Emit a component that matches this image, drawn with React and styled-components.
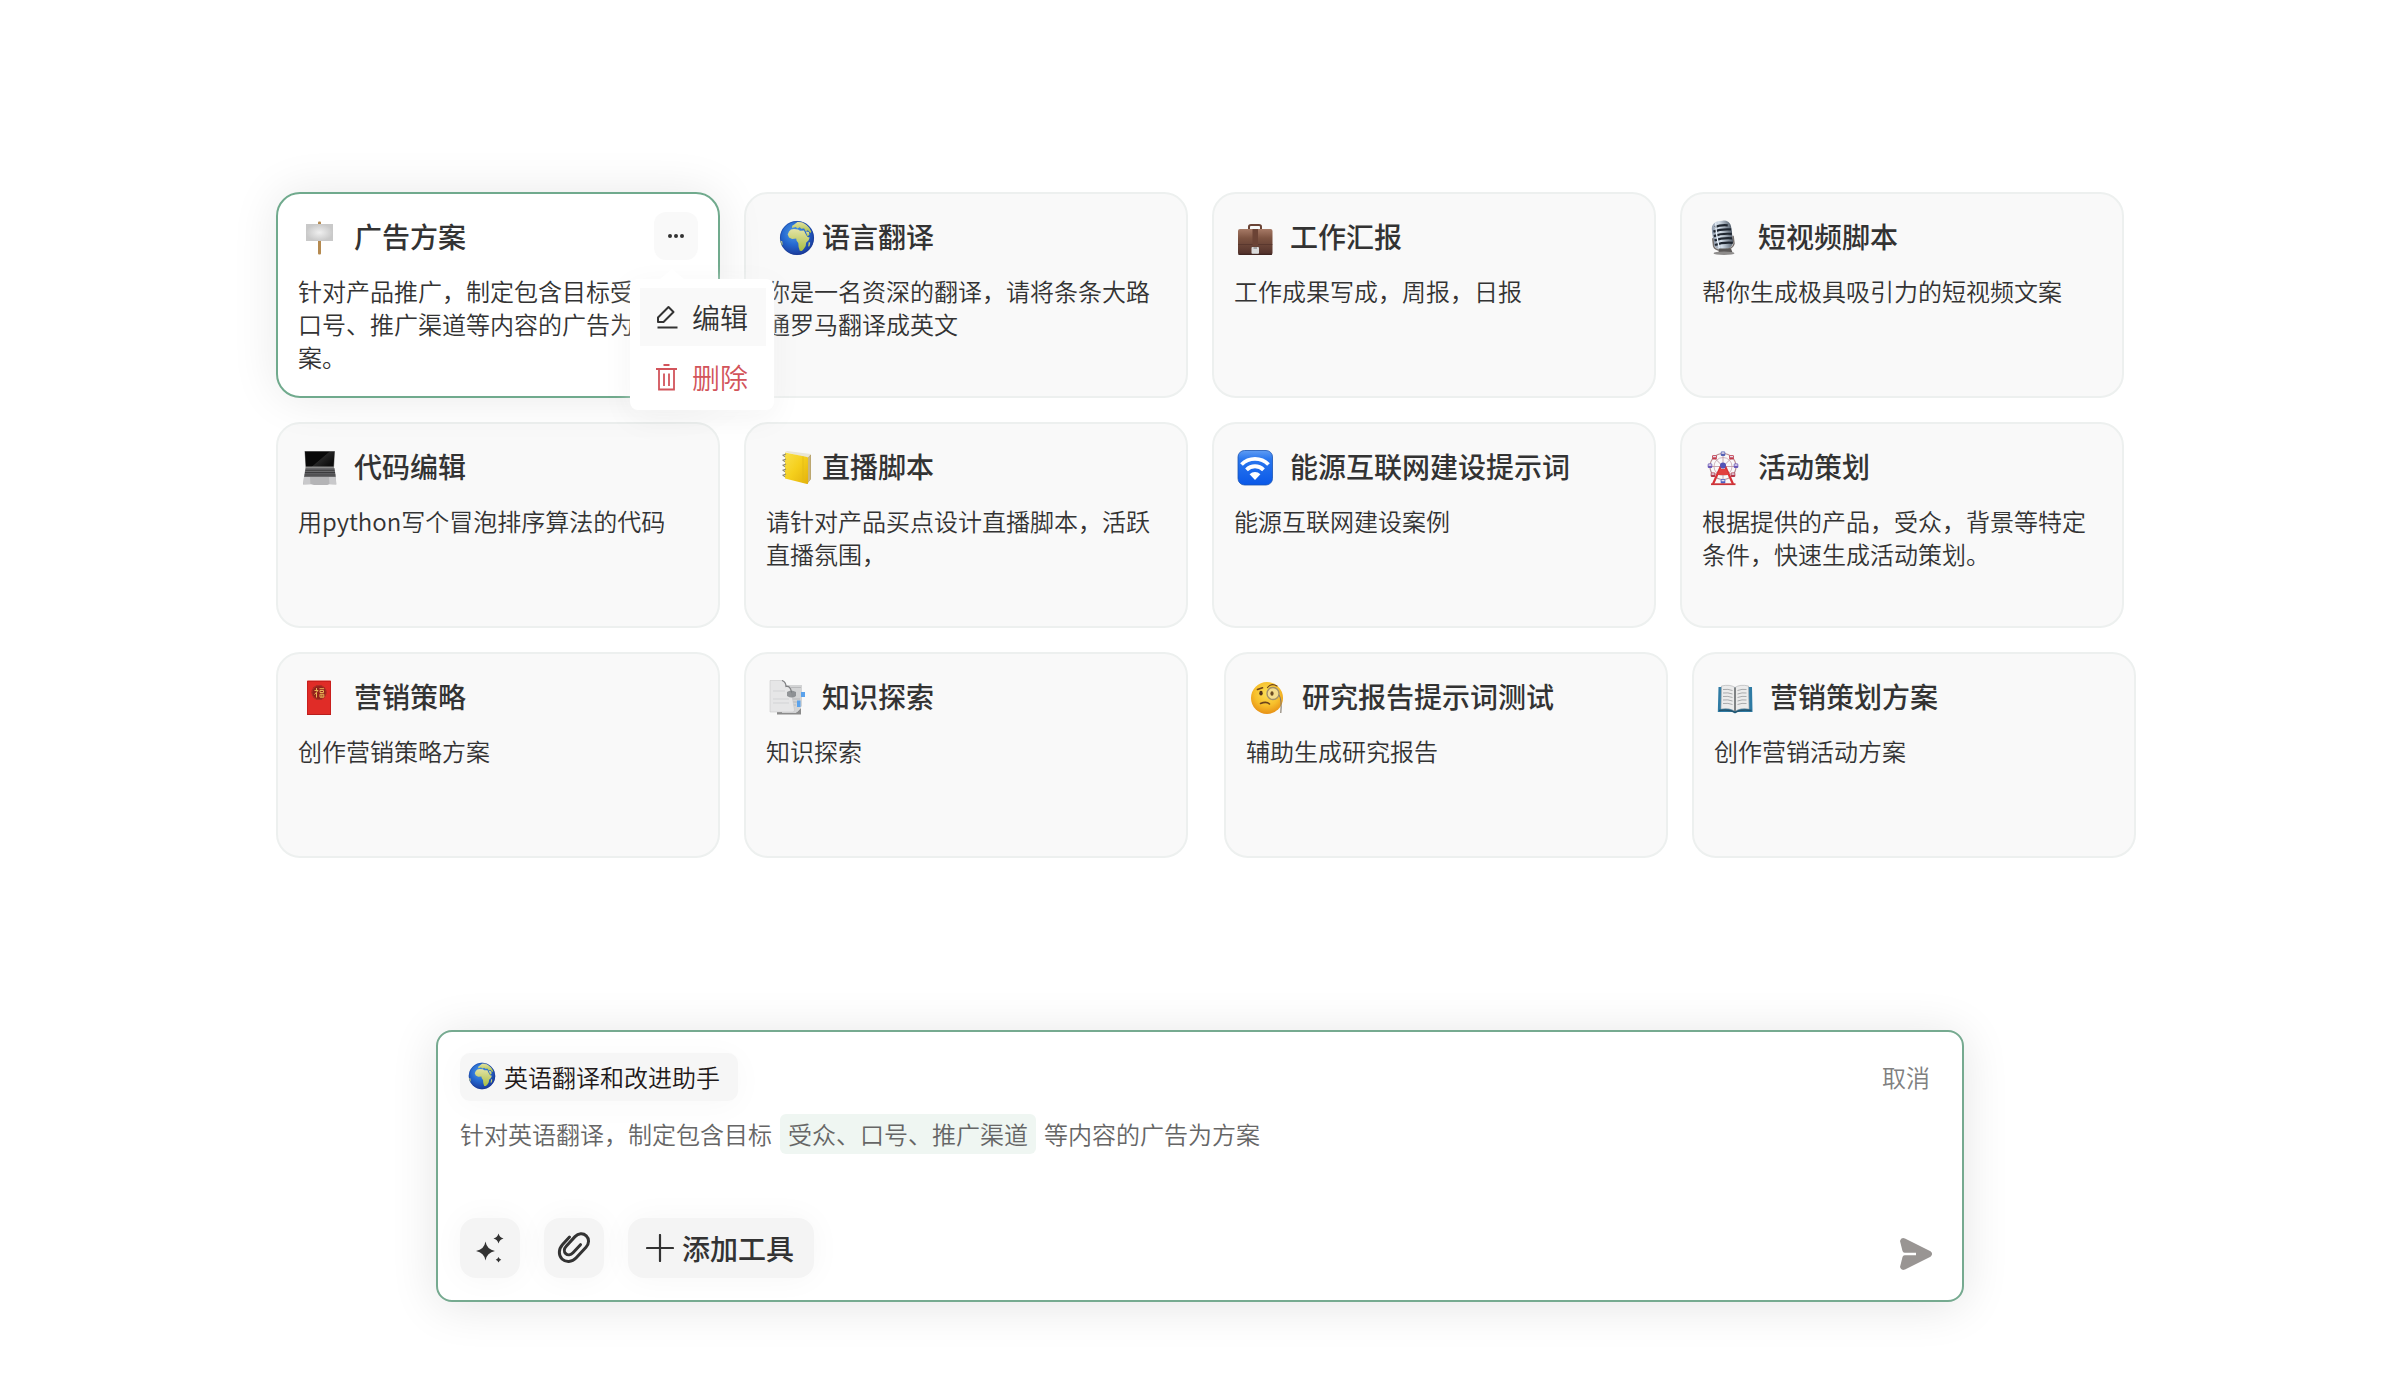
import React from "react";
import styled, { createGlobalStyle, css } from "styled-components";

const GlobalStyle = createGlobalStyle`
  *, *::before, *::after { box-sizing: border-box; }
  body {
    margin: 0;
    background: #fff;
    color: #333;
    font-family: "Noto Sans CJK SC", sans-serif;
  }
  button, input { font: inherit; color: inherit; border: 0; margin: 0; padding: 0; background: none; }
  button { cursor: pointer; }
  h2, p, ul { margin: 0; padding: 0; }
  svg { display: block; flex: none; }
`;

/* ---------- drawings ---------- */

const Emoji = ({ size = 36, children }) => (
  <svg width={size} height={size} viewBox="0 0 36 36" aria-hidden="true">{children}</svg>
);

const Signpost = () => (
  <Emoji>
    <defs>
      <radialGradient id="board"><stop offset="0" stopColor="#efefef" /><stop offset="1" stopColor="#c9c9c9" /></radialGradient>
    </defs>
    <rect x="17" y="1.5" width="3" height="33" rx="1" fill="#b58a50" />
    <rect x="5" y="4" width="27" height="17" fill="url(#board)" />
  </Emoji>
);

const Globe = ({ size, id }) => (
  <Emoji size={size}>
    <defs>
      <radialGradient id={`${id}-sea`} cx=".42" cy=".35" r=".65">
        <stop offset="0" stopColor="#4f9be6" /><stop offset=".55" stopColor="#2467cf" /><stop offset="1" stopColor="#1b3c9c" />
      </radialGradient>
      <linearGradient id={`${id}-land`} x1="0" y1="0" x2="0" y2="1">
        <stop offset="0" stopColor="#e3e3a4" /><stop offset="1" stopColor="#a9bd45" />
      </linearGradient>
      <clipPath id={`${id}-clip`}><circle cx="18" cy="18" r="17" /></clipPath>
    </defs>
    <circle cx="18" cy="18" r="17" fill={`url(#${id}-sea)`} />
    <g clipPath={`url(#${id}-clip)`} fill={`url(#${id}-land)`}>
      <path d="M12 9.500 15 9l4 .4 2 1.300 4-.2 1.600 3.500 1.900 3 2.200.6-1.200 3-2.400 2.200-.4 3.300-2 3-1.800 1.800-2.100-.2-1.200-3.600-.3-4-1.700-2.400-.4-2.100-4 .5-3.200-1.600-1.300-3 1.300-3z" />
      <path d="m13 8 .2-2.300 2-1.300L18.400 2 23 1.800l4 2.600 3.200 3.400 2.200 4-1 1.200-2.600-2.800-2.200 1.200-1.400-2.800-3 .2-1.400-1.500-2.400 1.200-1.600-1.500z" />
      <path d="m26.800 11.600 3 .4.7 2.700-2 1.700z" />
      <path d="m0 20 3.200 1.300.4 3.100-2 3.600zM29.800 22l1.400.8-.7 3.400-1.400.4z" />
    </g>
    <circle cx="18" cy="18" r="16.600" fill="none" stroke="#17368e" strokeWidth=".8" opacity=".6" />
  </Emoji>
);

const Briefcase = () => (
  <Emoji>
    <defs>
      <linearGradient id="leather" x1="0" y1="0" x2="0" y2="1"><stop offset="0" stopColor="#a67a66" /><stop offset=".35" stopColor="#7d5341" /><stop offset="1" stopColor="#50302a" /></linearGradient>
    </defs>
    <path d="M12 10V6.800Q12 5 14 5h8q2 0 2 1.800V10" fill="none" stroke="#6a4436" strokeWidth="2" />
    <rect x="1" y="9" width="34.500" height="26" rx="2" fill="url(#leather)" />
    <path d="M1 24.500h34.500" stroke="#4a2c25" strokeWidth="1" opacity=".5" />
    <rect x="15.500" y="9" width="5.500" height="16" fill="#6b4335" />
    <rect x="14.500" y="27" width="7.500" height="7" rx="1" fill="#dcdcdc" />
    <rect x="16.500" y="27" width="3.500" height="2" fill="#a5a5a5" />
    <path d="M1.500 34.300h33.500" stroke="#3b2320" strokeWidth="1" />
  </Emoji>
);

const Microphone = () => (
  <Emoji>
    <defs>
      <linearGradient id="mic"><stop offset="0" stopColor="#8b97a8" /><stop offset=".4" stopColor="#d5dfea" /><stop offset="1" stopColor="#55606d" /></linearGradient>
      <clipPath id="mic-clip"><rect x="7.500" y=".5" width="20" height="29" rx="8" /></clipPath>
    </defs>
    <g transform="rotate(-7 18 16)">
      <g clipPath="url(#mic-clip)">
        <rect x="7.500" y=".5" width="20" height="29" fill="url(#mic)" />
        <g stroke="#1f2630" strokeWidth="2.200" fill="none">
          <path d="M11 6q6-1.500 13 0M9 10.500q8-2 18 0M9 15q8-2 18 0M9 19.500q8-2 18 0M9 24q8-2 18 0" />
        </g>
        <path d="M12.500 1.500q-1.500 12 .5 27" stroke="#e8f1fa" strokeWidth="1.300" fill="none" />
      </g>
      <path d="M7.500 17v8q1 5 10 5t10.500-5v-8" stroke="#77716f" strokeWidth="1.500" fill="none" />
    </g>
    <path d="M14 28.500h12l1.500 4h-14z" fill="#5b5857" />
    <ellipse cx="19" cy="33.300" rx="10.500" ry="1.700" fill="#8e8c8b" />
  </Emoji>
);

const Laptop = () => (
  <Emoji>
    <defs>
      <linearGradient id="screen" x1="0" y1="0" x2="1" y2=".6"><stop offset=".6" stopColor="#090909" /><stop offset=".63" stopColor="#262626" /><stop offset="1" stopColor="#0e0e0e" /></linearGradient>
    </defs>
    <path d="M3.500 1h30.500l-1 17H4.500z" fill="#8b8b8b" />
    <path d="M4 1.500h29.500l-.9 15H4.900z" fill="url(#screen)" />
    <path d="M4.500 18h29l1.300 9H3z" fill="#69696b" />
    <path d="M4.500 20.200h29M4 22.600h30M3.700 25h30.700" stroke="#3b3b3d" strokeWidth="1.100" />
    <path d="M3 27h31.800l.5 7.500-7-.3-2 .8H13l-3-.8-8 .3z" fill="#b4b4b6" />
    <path d="M9 27h-6l-.6 7.200 7-.2zM28 27h6.700l.5 7.200-6.800-.2z" fill="#c9c9cb" />
  </Emoji>
);

const Notebook = () => (
  <Emoji>
    <defs>
      <linearGradient id="cover" x1="0" y1="0" x2="1" y2="1"><stop offset="0" stopColor="#f9e04b" /><stop offset=".5" stopColor="#f5cf1c" /><stop offset="1" stopColor="#e3b10c" /></linearGradient>
    </defs>
    <path d="m27 7 5-2.500V29l-4 5z" fill="#a9925a" />
    <path d="m6 2 2-1 24 3-3 4z" fill="#e9e6d6" />
    <path d="M28.600 8 31.600 5v24l-3 4z" fill="#c9b680" />
    <path d="M6 2.500 28 7q1 .3 1 1.300v25q0 1-1 .7L6 28.500z" fill="url(#cover)" />
    <path d="M24 6.400v26.500" stroke="#e2bb18" strokeWidth=".8" />
    <path d="m7 4-3 1.200 2 1.600M7 9l-3 1.200 2 1.600M7 14l-3 1.200 2 1.600M7 19l-3 1.200 2 1.600M7 24l-3 1.200 2 1.600" stroke="#8f8a78" strokeWidth="1.100" fill="none" />
  </Emoji>
);

const Wifi = () => (
  <Emoji>
    <defs>
      <linearGradient id="wifi" x1="0" y1="0" x2="0" y2="1"><stop offset="0" stopColor="#5f9cf3" /><stop offset=".25" stopColor="#2a77ee" /><stop offset="1" stopColor="#0a58e8" /></linearGradient>
    </defs>
    <rect x="1" y=".5" width="34.500" height="34.500" rx="6.500" fill="url(#wifi)" stroke="#1b55b5" strokeWidth=".8" />
    <path d="M4.500 14.500a19 19 0 0 1 27 0M9.500 19.800a12 12 0 0 1 17 0" stroke="#fff" strokeWidth="3.800" fill="none" />
    <path d="m12.600 24.300a7.600 7.600 0 0 1 10.800 0L18 30z" fill="#fff" />
  </Emoji>
);

const cabins = [
  [18, 3.5, "#5461b5"], [26.5, 7, "#c33c4c"], [31, 15.5, "#6a57b8"], [28, 24.5, "#b3384a"],
  [18, 31, "#4b5fc4"], [8, 24.5, "#b3384a"], [5, 15.5, "#6a57b8"], [9.5, 7, "#c33c4c"],
];
const FerrisWheel = () => (
  <Emoji>
    <circle cx="18" cy="16.500" r="13" fill="none" stroke="#b98d95" strokeWidth="1.200" />
    <circle cx="18" cy="16.500" r="9" fill="none" stroke="#c7a4b0" strokeWidth=".8" />
    <path d="M18 3v27M5 16.500h26M9 7.500l18 18M27 7.500l-18 18" stroke="#c09aa6" strokeWidth=".9" />
    {cabins.map(([x, y, fill]) => (
      <g key={`${x}-${y}`}>
        <rect x={x - 2.3} y={y - 2} width="4.600" height="4.500" rx="1.200" fill={fill} />
        <rect x={x - 1.5} y={y - 1.2} width="3" height="1.500" fill="#e5ddec" />
      </g>
    ))}
    <path d="M16.500 15 8 34M19.500 15 28 34" stroke="#d93136" strokeWidth="2.200" />
    <path d="M15 19h6l2.500 6h-11z" fill="#e1403f" />
    <circle cx="18" cy="15.500" r="3" fill="#5355b8" />
    <path d="M6 34.200h24.500" stroke="#cb3439" strokeWidth="1.800" />
  </Emoji>
);

const RedEnvelope = () => (
  <Emoji>
    <rect x="6" y=".5" width="24" height="34.500" rx=".8" fill="#e02c27" />
    <path d="M6 1.500h24M6.500 1v34M29.500 1v34" stroke="#c91f1d" strokeWidth="1" />
    <circle cx="18" cy="12.500" r="7.500" fill="#94201b" />
    <circle cx="18" cy="12.500" r="7" fill="none" stroke="#b53a26" strokeWidth=".7" />
    <path d="M15.500 8v2M13.500 10.500h3.500l-3.500 4M15.500 12.500v5M18.500 8.700h4.500M19 10.500h3.500v2H19zM19 14.200h3.800v3H19zM20.900 14.200v3" stroke="#e8b557" strokeWidth="1" fill="none" />
    <path d="M6 34.500h24" stroke="#b81d1c" strokeWidth="1" />
  </Emoji>
);

const Pages = () => (
  <Emoji>
    <path d="M8 32h20l4-4v6.500H8z" fill="#8b8b8b" />
    <path d="M13 5h20v21l-6 7H13z" fill="#d3d4d5" />
    <path d="M22 7.500h10M22 19h9M22 22h6M21 25h6" stroke="#b9babc" strokeWidth="1" />
    <path d="M32 12h4v5h-4zM28 20.500h3.500V27H28z" fill="#5aa2ec" />
    <path d="M1 .5h12q3.500 1 4 5.500h3q3 .5 2.500 7l3 17q.3 2-2 2H1z" fill="#e6e6e7" stroke="#c0c1c2" strokeWidth=".5" />
    <path d="M4 11h12M4 19h16M4 23h16" stroke="#d2d3d5" strokeWidth="1" />
    <path d="M13 .5q4 1.500 4 6 4.500-1 5.500 6" fill="none" stroke="#7d7e80" strokeWidth="1.200" />
    <path d="M18 12q4-3 9 0v4q-4 3-9 0z" fill="#76797d" opacity=".75" />
  </Emoji>
);

const Monocle = () => (
  <Emoji>
    <defs>
      <radialGradient id="face" cx=".5" cy=".35" r=".65"><stop offset="0" stopColor="#fbe157" /><stop offset=".6" stopColor="#f7bf2b" /><stop offset="1" stopColor="#e79116" /></radialGradient>
    </defs>
    <circle cx="18" cy="18" r="16" fill="url(#face)" />
    <path d="m8.500 9.500 5-1.700" stroke="#6d441b" strokeWidth="1.700" fill="none" strokeLinecap="round" />
    <path d="M18.500 7.500q4-5 9.500-1.500" stroke="#6d441b" strokeWidth="1.200" fill="none" strokeLinecap="round" />
    <ellipse cx="12" cy="13.200" rx="1.700" ry="2.400" fill="#51331a" />
    <circle cx="24" cy="13.500" r="6" fill="#f4dd8d" stroke="#a1906a" strokeWidth="1.400" />
    <ellipse cx="23" cy="13.500" rx="1.600" ry="2.300" fill="#6a4a22" />
    <path d="M30 15q3 4 1.800 18" stroke="#83796a" strokeWidth="1.100" fill="none" />
    <path d="M11.500 23.500q6-2.500 9 .5" stroke="#6d441b" strokeWidth="1.600" fill="none" strokeLinecap="round" />
  </Emoji>
);

const OpenBook = () => (
  <Emoji>
    <path d="M1.500 7h33.500l.5 25H20l-2 1.500-2-1.500H.8z" fill="#2f7ba4" />
    <path d="M4.500 6Q13 4 18 7.500q5-3.500 13.500-1.500l.5 23Q24 27.500 18 31q-6-3.500-14-2z" fill="#ebebeb" stroke="#a9abac" strokeWidth=".6" />
    <path d="M18 7.500V31" stroke="#7f8284" strokeWidth="2" />
    <path d="M6 9.500q5-.7 9.500 1M6 13q5-.7 9.500 1M6 16.500q5-.7 9.500 1M6 20q5-.7 9.500 1M6 23.500q5-.7 9.500 1M20.500 10.500q4.500-1.700 9-1M20.500 14q4.500-1.700 9-1M20.500 17.500q4.500-1.700 9-1M20.500 21q4.500-1.700 9-1M20.500 24.500q4.500-1.700 9-1" stroke="#a9abad" strokeWidth="1" fill="none" />
    <path d="M2 30.500q10-1.500 16 1.800Q24 29 34.500 30.500" stroke="#24556f" strokeWidth="1.500" fill="none" />
  </Emoji>
);

const DotsIcon = () => (
  <svg width="18" height="6" viewBox="0 0 18 6" fill="#333" aria-hidden="true">
    <circle cx="3" cy="3" r="2" /><circle cx="9" cy="3" r="2" /><circle cx="15" cy="3" r="2" />
  </svg>
);

const PencilIcon = () => (
  <svg width="24" height="24" viewBox="0 0 24 24" fill="none" stroke="currentColor" strokeWidth="2" strokeLinejoin="round" aria-hidden="true">
    <path d="M2 17v-4.500L12.500 2l5 5L7.500 17zM1.500 22.500h20" />
  </svg>
);

const TrashIcon = () => (
  <svg width="24" height="28" viewBox="0 0 24 28" fill="none" stroke="currentColor" strokeWidth="1.800" aria-hidden="true">
    <path d="M7.500 2h6M0 6h21M3 6v20.500h15V6M8 10.500v12.500M13 10.500v12.500" />
  </svg>
);

const SparklesIcon = () => (
  <svg width="32" height="32" viewBox="0 0 32 32" fill="#333" aria-hidden="true">
    <path d="M11.500 9.500q1.300 8 9.500 9.500-8.200 1.500-9.500 9.500Q10.200 20.500 2 19q8.200-1.500 9.500-9.500zM24.500 1.500q1 4 5 5-4 1-5 5-1-4-5-5 4-1 5-5zM24.500 25q.8 2 2.800 2.800-2 .8-2.800 2.800-.8-2-2.800-2.800 2-.8 2.800-2.800z" />
  </svg>
);

const ClipIcon = () => (
  <svg width="34" height="34" viewBox="0 0 34 34" fill="none" stroke="#333" strokeWidth="3" strokeLinecap="round" aria-hidden="true">
    <path d="M12.500 6 5.600 13.500C1.500 18 1.300 24.500 5 28s10 3.300 14-1l10-10.700c3.300-3.600 3.400-8.600.3-11.500s-8-2.700-11.300.8L9.200 15.200c-2.300 2.500-2.400 5.600-.5 7.400s5 1.600 7.300-.8l7.500-8.100" />
  </svg>
);

const PlusIcon = () => (
  <svg width="28" height="28" viewBox="0 0 28 28" stroke="#333" strokeWidth="2.200" strokeLinecap="round" aria-hidden="true">
    <path d="M14 1v26M1 14h26" />
  </svg>
);

const SendIcon = () => (
  <svg width="34" height="34" viewBox="0 0 34 34" fill="#999593" aria-hidden="true">
    <path d="M6 1.500 31.500 14.300q3.200 2.700 0 5.400L6 32.500Q2 34 1 30l2.500-10q.4-1.700 2.200-1.700H17v-2.600H5.700q-1.800 0-2.200-1.700L1 4Q2 0 6 1.500z" />
  </svg>
);

/* ---------- layout ---------- */

const Page = styled.main`
  display: flex;
  flex-direction: column;
  align-items: center;
  gap: 172px;
  min-height: 100vh;
  padding: 192px 11.5% 78px;
`;

const CardGrid = styled.section`
  display: grid;
  grid-template-columns: repeat(4, minmax(0, 1fr));
  gap: 24px;
  width: 100%;
`;

const Card = styled.article`
  position: relative;
  min-height: 206px;
  padding: 20px;
  border: 2px solid #edf0ef;
  border-radius: 24px;
  background: #f9f9f9;
  ${(p) => p.$nudged && css`
    margin: 0 -12px 0 12px;
  `}
  ${(p) => p.$selected && css`
    z-index: 1;
    border-color: #70aa8d;
    background: #fff;
    box-shadow: 0 0 48px rgba(0, 0, 0, 0.09);
  `}
`;

const CardHeader = styled.header`
  display: flex;
  align-items: center;
  height: 44px;
  margin-bottom: 16px;
`;

const IconSlot = styled.span`
  flex: none;
  width: 56px;
  padding-top: 4px;
  padding-left: ${(p) => (p.$inset ? 13 : 3)}px;
`;

const CardTitle = styled.h2`
  font-size: 28px;
  font-weight: 500;
  line-height: 44px;
  white-space: nowrap;
`;

const CardText = styled.p`
  font-size: 24px;
  font-weight: 350;
  line-height: 33px;
`;

const MoreButton = styled.button`
  display: grid;
  place-items: center;
  width: 44px;
  height: 48px;
  margin-left: auto;
  border-radius: 12px;
  background: #f9f9f9;
`;

const Menu = styled.ul`
  position: absolute;
  top: 85px;
  right: -56px;
  display: grid;
  gap: 2px;
  width: 144px;
  padding: 9px 8px 4px 10px;
  border-radius: 8px;
  background: #fff;
  list-style: none;
  box-shadow: 0 0 16px rgba(255, 255, 255, 0.5), 0 8px 32px rgba(0, 0, 0, 0.05);
  &::before {
    content: "";
    position: absolute;
    top: -10px;
    left: 30px;
    border: solid transparent;
    border-width: 0 12px 10px;
    border-bottom-color: #fff;
  }
`;

const MenuItem = styled.button`
  display: flex;
  align-items: center;
  gap: 12px;
  width: 100%;
  height: 58px;
  padding-left: 16px;
  background: ${(p) => (p.$active ? "#f9f9f9" : "transparent")};
  color: ${(p) => (p.$danger ? "#d2545b" : "#333")};
  font-size: 28px;
  font-weight: 350;
  line-height: 40px;
  white-space: nowrap;
`;

const Composer = styled.form`
  width: 100%;
  max-width: 1528px;
  padding: 21px 22px 22px;
  border: 2px solid #76aa90;
  border-radius: 16px;
  background: #fff;
  box-shadow: 0 4px 48px rgba(0, 0, 0, 0.11);
`;

const ComposerRow = styled.div`
  display: flex;
  align-items: center;
  justify-content: space-between;
`;

const AssistantChip = styled.span`
  display: flex;
  align-items: center;
  gap: 8px;
  height: 48px;
  padding: 0 18px 2px 8px;
  border-radius: 10px;
  background: #f6f6f6;
  box-shadow: 0 4px 32px rgba(0, 0, 0, 0.03);
  color: #1f1919;
  font-size: 24px;
  font-weight: 350;
`;

const CancelButton = styled.button`
  margin-right: 10px;
  padding-bottom: 2px;
  color: #808080;
  font-size: 24px;
  font-weight: 350;
`;

const Prompt = styled.label`
  display: flex;
  flex-wrap: wrap;
  align-items: center;
  gap: 8px;
  margin: 13px 0 64px;
  color: #666;
  font-size: 24px;
  font-weight: 350;
  line-height: 40px;
`;

const SlotInput = styled.input`
  width: 256px;
  height: 40px;
  padding: 0 8px;
  border-radius: 6px;
  background: #eff6f2;
`;

const Tools = styled.div`
  display: flex;
  gap: 24px;
`;

const ToolButton = styled.button`
  display: flex;
  align-items: center;
  justify-content: center;
  gap: 8px;
  min-width: 60px;
  height: 60px;
  padding: ${(p) => (p.$wide ? "0 20px 0 18px" : "0")};
  border-radius: 16px;
  background: #f4f4f4;
  box-shadow: 0 0 32px rgba(0, 0, 0, 0.04);
  font-size: 28px;
  font-weight: 500;
`;

const SendButton = styled.button`
  margin: 12px 7px 0 0;
`;

const cards = [
  { title: "广告方案", icon: <Signpost />, text: "针对产品推广，制定包含目标受众、口号、推广渠道等内容的广告为方案。", selected: true },
  { title: "语言翻译", icon: <Globe id="earth" />, inset: true, text: "你是一名资深的翻译，请将条条大路通罗马翻译成英文" },
  { title: "工作汇报", icon: <Briefcase />, text: "工作成果写成，周报，日报" },
  { title: "短视频脚本", icon: <Microphone />, text: "帮你生成极具吸引力的短视频文案" },
  { title: "代码编辑", icon: <Laptop />, text: "用python写个冒泡排序算法的代码" },
  { title: "直播脚本", icon: <Notebook />, inset: true, text: "请针对产品买点设计直播脚本，活跃直播氛围，" },
  { title: "能源互联网建设提示词", icon: <Wifi />, text: "能源互联网建设案例" },
  { title: "活动策划", icon: <FerrisWheel />, text: "根据提供的产品，受众，背景等特定条件，快速生成活动策划。" },
  { title: "营销策略", icon: <RedEnvelope />, text: "创作营销策略方案" },
  { title: "知识探索", icon: <Pages />, text: "知识探索" },
  { title: "研究报告提示词测试", icon: <Monocle />, text: "辅助生成研究报告", nudged: true },
  { title: "营销策划方案", icon: <OpenBook />, text: "创作营销活动方案", nudged: true },
];

export default function App() {
  return (
    <>
      <GlobalStyle />
      <Page lang="zh-CN">
        <CardGrid>
          {cards.map((card) => (
            <Card key={card.title} $selected={card.selected} $nudged={card.nudged}>
              <CardHeader>
                <IconSlot $inset={card.inset}>{card.icon}</IconSlot>
                <CardTitle>{card.title}</CardTitle>
                {card.selected && (
                  <MoreButton type="button" aria-label="更多" aria-expanded="true"><DotsIcon /></MoreButton>
                )}
              </CardHeader>
              <CardText>{card.text}</CardText>
              {card.selected && (
                <Menu>
                  <li><MenuItem type="button" $active><PencilIcon />编辑</MenuItem></li>
                  <li><MenuItem type="button" $danger><TrashIcon />删除</MenuItem></li>
                </Menu>
              )}
            </Card>
          ))}
        </CardGrid>

        <Composer onSubmit={(e) => e.preventDefault()}>
          <ComposerRow>
            <AssistantChip><Globe size={28} id="chip" />英语翻译和改进助手</AssistantChip>
            <CancelButton type="button">取消</CancelButton>
          </ComposerRow>
          <Prompt>
            <span>针对英语翻译，制定包含目标</span>
            <SlotInput type="text" defaultValue="受众、口号、推广渠道" />
            <span>等内容的广告为方案</span>
          </Prompt>
          <ComposerRow>
            <Tools>
              <ToolButton type="button" aria-label="智能优化"><SparklesIcon /></ToolButton>
              <ToolButton type="button" aria-label="附件"><ClipIcon /></ToolButton>
              <ToolButton type="button" $wide><PlusIcon />添加工具</ToolButton>
            </Tools>
            <SendButton type="submit" aria-label="发送"><SendIcon /></SendButton>
          </ComposerRow>
        </Composer>
      </Page>
    </>
  );
}
